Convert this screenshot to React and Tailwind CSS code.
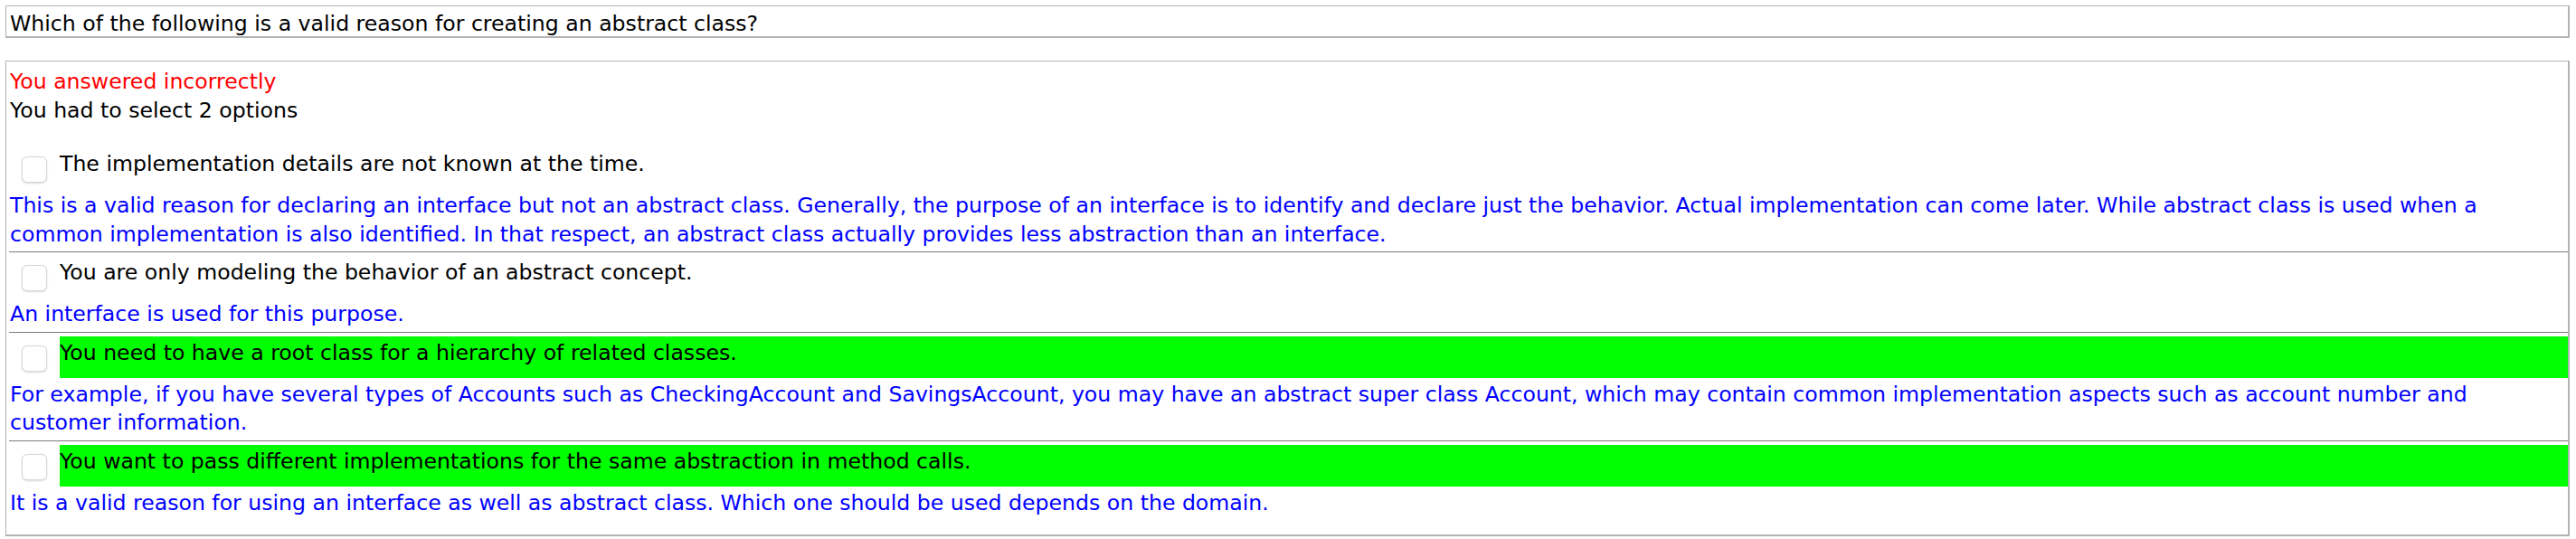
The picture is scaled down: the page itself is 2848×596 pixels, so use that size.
import React from 'react';

const options = [
  {
    text: 'The implementation details are not known at the time.',
    correct: false,
    explanation: [
      'This is a valid reason for declaring an interface but not an abstract class. Generally, the purpose of an interface is to identify and declare just the behavior. Actual implementation can come later. While abstract class is used when a',
      'common implementation is also identified. In that respect, an abstract class actually provides less abstraction than an interface.',
    ],
  },
  {
    text: 'You are only modeling the behavior of an abstract concept.',
    correct: false,
    explanation: ['An interface is used for this purpose.'],
  },
  {
    text: 'You need to have a root class for a hierarchy of related classes.',
    correct: true,
    explanation: [
      'For example, if you have several types of Accounts such as CheckingAccount and SavingsAccount, you may have an abstract super class Account, which may contain common implementation aspects such as account number and',
      'customer information.',
    ],
  },
  {
    text: 'You want to pass different implementations for the same abstraction in method calls.',
    correct: true,
    explanation: ['It is a valid reason for using an interface as well as abstract class. Which one should be used depends on the domain.'],
  },
];

const Option = ({ option, first }) => (
  <div className={first ? 'mt-[25px]' : 'border-t border-[#7a7a7a]'}>
    <div className="flex items-start mt-[4px]">
      <div className="mt-[10px] ml-[14px] mr-[14px] w-[28px] h-[29px] shrink-0 rounded-[6px] border border-[#d6d6d6] bg-white shadow-[0_1px_2px_rgba(0,0,0,0.15)]" />
      <div
        className={`flex-1 h-[46px] pt-[3px] leading-[31px] text-black whitespace-nowrap ${
          option.correct ? 'bg-[#00ff00]' : ''
        }`}
      >
        {option.text}
      </div>
    </div>
    <div className="mt-[3px] pb-[3px] pl-[1px] text-[#0000ff] leading-[31.5px] whitespace-nowrap">
      {option.explanation.map((line, i) => (
        <div key={i}>{line}</div>
      ))}
    </div>
  </div>
);

export default function App() {
  return (
    <div
      className="min-h-screen bg-white pt-[6px] pl-[6px] pr-[7px] text-[23.6px] text-black"
      style={{ fontFamily: '"DejaVu Sans", Verdana, sans-serif' }}
    >
      {/* Question */}
      <div className="h-[36px] border-t border-l border-r-2 border-b-2 border-[#b3b3b3] pl-[4px] pt-[4px] leading-[31px]">
        Which of the following is a valid reason for creating an abstract class?
      </div>

      {/* Answer */}
      <div className="mt-[25px] border-t border-l border-r-2 border-b-2 border-[#b3b3b3] pl-[3px] pt-[7px] pb-[16px]">
        <div className="pl-[1px] leading-[31.5px]">
          <div className="text-[#ff0000]">You answered incorrectly</div>
          <div>You had to select 2 options</div>
        </div>
        {options.map((option, i) => (
          <Option key={i} option={option} first={i === 0} />
        ))}
      </div>
    </div>
  );
}
